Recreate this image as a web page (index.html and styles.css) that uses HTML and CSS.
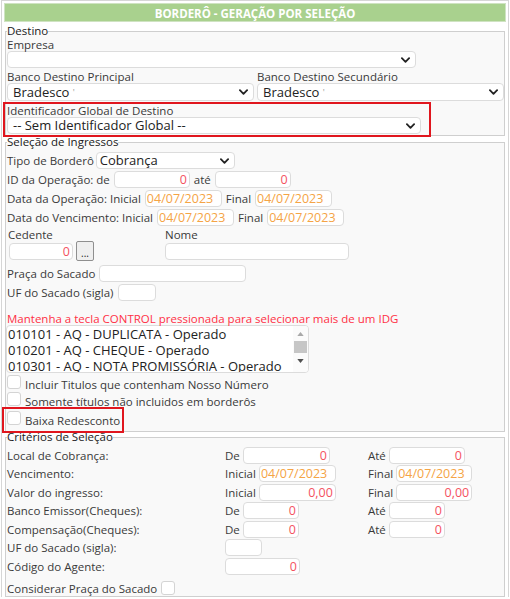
FILE: index.html
```html
<!DOCTYPE html>
<html lang="pt-BR">
<head>
<meta charset="utf-8">
<title>Borderô - Geração por Seleção</title>
<link rel="stylesheet" href="styles.css">
</head>
<body>
<div class="page">
  <div class="title">BORDERÔ - GERAÇÃO POR SELEÇÃO</div>

  <fieldset class="fs fs-destino">
    <legend>Destino</legend>
    <div class="lbl">Empresa</div>
    <div class="sel sel-empresa"><span class="sel-text"></span><svg class="chev" viewBox="0 0 10 6"><polyline points="1,1 5,5 9,1"/></svg></div>
    <div class="bancos">
      <div class="banco">
        <div class="lbl">Banco Destino Principal</div>
        <div class="sel"><span class="sel-text">Bradesco <span class="tick">'</span></span><svg class="chev" viewBox="0 0 10 6"><polyline points="1,1 5,5 9,1"/></svg></div>
      </div>
      <div class="banco">
        <div class="lbl">Banco Destino Secundário</div>
        <div class="sel"><span class="sel-text">Bradesco <span class="tick">'</span></span><svg class="chev" viewBox="0 0 10 6"><polyline points="1,1 5,5 9,1"/></svg></div>
      </div>
    </div>
    <div class="idg">
      <div class="lbl lbl-idg">Identificador Global de Destino</div>
      <div class="sel sel-idg"><span class="sel-text">-- Sem Identificador Global --</span><svg class="chev" viewBox="0 0 10 6"><polyline points="1,1 5,5 9,1"/></svg></div>
    </div>
  </fieldset>

  <fieldset class="fs fs-sel">
    <legend>Seleção de Ingressos</legend>
    <div class="row r-tipo"><span>Tipo de Borderô</span><div class="sel sel-tipo"><span class="sel-text">Cobrança</span><svg class="chev" viewBox="0 0 10 6"><polyline points="1,1 5,5 9,1"/></svg></div></div>
    <div class="row"><span>ID da Operação: de</span><input class="inp num w76" value="0"><span>até</span><input class="inp num w76" value="0"></div>
    <div class="row"><span>Data da Operação: Inicial</span><input class="inp date w77" value="04/07/2023"><span>Final</span><input class="inp date w77" value="04/07/2023"></div>
    <div class="row"><span>Data do Vencimento: Inicial</span><input class="inp date w77" value="04/07/2023"><span>Final</span><input class="inp date w77" value="04/07/2023"></div>
    <div class="ced-nome">
      <div class="ced">
        <div class="lbl lbl-ced">Cedente</div>
        <div class="ced-in"><input class="inp num w64" value="0"><button class="dots" type="button">...</button></div>
      </div>
      <div class="nome">
        <div class="lbl">Nome</div>
        <input class="inp w184 nome-in">
      </div>
    </div>
    <div class="row r-praca"><span>Praça do Sacado</span><input class="inp w147"></div>
    <div class="row r-uf"><span>UF do Sacado (sigla)</span><input class="inp w38"></div>
    <div class="warn">Mantenha a tecla CONTROL pressionada para selecionar mais de um IDG</div>
    <div class="listbox">
      <div class="opts">
        <div>010101 - AQ - DUPLICATA - Operado</div>
        <div>010201 - AQ - CHEQUE - Operado</div>
        <div>010301 - AQ - NOTA PROMISSÓRIA - Operado</div>
      </div>
      <div class="sbar">
        <svg class="arr" viewBox="0 0 8 5"><polygon class="arr-up" points="0,5 4,0 8,5"/></svg>
        <div class="thumb"></div>
        <svg class="arr" viewBox="0 0 8 5"><polygon class="arr-dn" points="0,0 8,0 4,5"/></svg>
      </div>
    </div>
    <div class="chk c1"><span class="box"></span><span class="chk-t">Incluir Titulos que contenham Nosso Número</span></div>
    <div class="chk c2"><span class="box"></span><span class="chk-t">Somente títulos não incluidos em borderôs</span></div>
    <div class="chk c3"><span class="box"></span><span class="chk-t">Baixa Redesconto</span></div>
  </fieldset>

  <fieldset class="fs fs-crit">
    <legend>Critérios de Seleção</legend>
    <div class="grid">
      <div>Local de Cobrança:</div>
      <div class="cell"><span>De</span><input class="inp num w87" value="0"></div>
      <div class="cell"><span>Até</span><input class="inp num w76" value="0"></div>

      <div>Vencimento:</div>
      <div class="cell"><span>Inicial</span><input class="inp date w77" value="04/07/2023"></div>
      <div class="cell"><span>Final</span><input class="inp date w76" value="04/07/2023"></div>

      <div>Valor do ingresso:</div>
      <div class="cell"><span>Inicial</span><input class="inp num w77" value="0,00"></div>
      <div class="cell"><span>Final</span><input class="inp num w76" value="0,00"></div>

      <div>Banco Emissor(Cheques):</div>
      <div class="cell"><span>De</span><input class="inp num w56" value="0"></div>
      <div class="cell"><span>Até</span><input class="inp num w56" value="0"></div>

      <div>Compensação(Cheques):</div>
      <div class="cell"><span>De</span><input class="inp num w56" value="0"></div>
      <div class="cell"><span>Até</span><input class="inp num w56" value="0"></div>

      <div>UF do Sacado (sigla):</div>
      <div class="cell"><input class="inp w37"></div>
      <div></div>

      <div>Código do Agente:</div>
      <div class="cell"><input class="inp num w75" value="0"></div>
      <div></div>
    </div>
    <div class="consid"><span>Considerar Praça do Sacado</span><span class="box"></span></div>
  </fieldset>
</div>
</body>
</html>
```

FILE: styles.css
```css
* { box-sizing: border-box; }
html, body { margin: 0; padding: 0; background: #fff; }
body {
  font-family: "Open Sans", "DejaVu Sans", sans-serif;
  font-size: 11.5px;
  line-height: 13px;
  color: #3a3a3a;
}
.page {
  width: 508px;
  margin-left: 1px;
  border: 1px solid #d6d6d6;
  border-bottom: none;
  padding: 2px 2px 0;
}
.title {
  height: 19px;
  background: #a9d18e;
  color: #fff;
  font-weight: 700;
  font-size: 11.5px;
  line-height: 19px;
  text-align: center;
  border: 1px solid #cfe3c2;
}

/* fieldsets */
.fs {
  margin: 0 1px;
  padding: 0 0 0 1px;
  border: 1px solid #cfcfcf;
  background: #f9f9f9;
  min-width: 0;
}
.fs legend {
  padding: 0;
  font-size: 11.5px;
  line-height: 14px;
  color: #1a1a1a;
}
.fs-destino { margin-top: 2px; }
.fs-sel { margin-top: -1px; }
.fs-crit { margin-top: -2px; padding-bottom: 1px; }

.lbl { line-height: 13px; height: 13px; }

/* select look-alike */
.sel {
  height: 17px;
  background: #fff;
  border: 1px solid #dcdcdc;
  border-radius: 4px;
  display: flex;
  align-items: center;
  justify-content: space-between;
  padding: 0 5px 0 5px;
  font-size: 13px;
  color: #222;
}
.sel-text { white-space: nowrap; }
.tick { color: #999; font-size: 9px; vertical-align: top; }
.chev { width: 9px; height: 6px; flex: none; }
.chev polyline { fill: none; stroke: #222; stroke-width: 2; stroke-linecap: round; stroke-linejoin: round; }

.sel-empresa { width: 409px; }
.bancos { display: flex; gap: 3px; margin-top: 2px; }
.banco { width: 247px; }
.banco .sel { height: 18px; }
.idg {
  margin-top: 3px;
  margin-left: -2px;
  width: 424px;
  padding: 0 0 1px 2px;
  outline: 2px solid #e0161e;
}
.lbl-idg { height: 13px; line-height: 13px; }
.sel-idg { width: 414px; height: 17px; }

/* rows */
.row {
  display: flex;
  align-items: center;
  gap: 4px;
  height: 17px;
  margin-top: 2px;
  white-space: nowrap;
}
.r-tipo { gap: 2px; margin-top: 3px; }
.sel-tipo { width: 139px; padding-left: 3px; }

.inp {
  height: 17px;
  border: 1px solid #dcdcdc;
  border-radius: 4px;
  background: #fff;
  font-family: "Open Sans", "DejaVu Sans", sans-serif;
  font-size: 12.5px;
  padding: 0 2px;
  margin: 0;
  outline: none;
}
.num { text-align: right; color: #f4525f; }
.date { text-align: left; color: #f5a445; padding-left: 1px; }
.w37 { width: 37px; }
.w38 { width: 38px; }
.w56 { width: 56px; }
.w64 { width: 64px; }
.w75 { width: 75px; }
.w76 { width: 76px; }
.w77 { width: 77px; }
.w87 { width: 87px; }
.w147 { width: 147px; }
.w184 { width: 184px; }

.ced-nome { display: flex; margin-top: 2px; }
.ced { width: 158px; }
.lbl-ced { padding-left: 1px; }
.ced-in { display: flex; align-items: center; gap: 3px; padding-left: 2px; height: 20px; }
.dots {
  width: 18px;
  height: 20px;
  padding: 0;
  margin: 0;
  border: 1px solid #8f8f8f;
  border-radius: 2px;
  background: #efefef;
  font-family: "Open Sans", sans-serif;
  font-size: 10px;
  line-height: 22px;
  color: #222;
}
.nome-in { display: block; margin-top: 2px; }
.r-praca { margin-top: 4px; }

.warn {
  margin-top: 11px;
  line-height: 13px;
  color: #ff3045;
  white-space: nowrap;
}
.listbox {
  width: 303px;
  height: 48px;
  margin-left: -1px;
  background: #fff;
  border: 1px solid #dcdcdc;
  border-radius: 4px;
  display: flex;
  overflow: hidden;
}
.opts {
  flex: 1;
  padding: 0 0 0 1px;
  font-size: 13px;
  line-height: 16px;
  color: #222;
  white-space: nowrap;
  overflow: hidden;
}
.sbar {
  width: 15px;
  background: #fbfbfb;
  display: flex;
  flex-direction: column;
  align-items: center;
  padding-top: 6px;
}
.arr { width: 7px; height: 4px; }
.arr-up { fill: #a9a9a9; }
.arr-dn { fill: #505050; }
.thumb { width: 13px; height: 12px; background: #c6c6c6; margin: 5px 0 6px; }

.chk { display: flex; align-items: flex-start; gap: 4px; white-space: nowrap; }
.box {
  width: 14px;
  height: 14px;
  flex: none;
  background: #fff;
  border: 1px solid #d4d4d4;
  border-radius: 3px;
}
.chk-t { margin-top: 3px; line-height: 13px; }
.c1 { margin-top: 2px; height: 17px; }
.c2 { height: 17px; }
.c3 {
  height: 22px;
  width: 118px;
  margin-left: -3px;
  padding: 2px 0 0 3px;
  outline: 2px solid #e0161e;
  position: relative;
}

/* criteria grid */
.grid {
  display: grid;
  grid-template-columns: 218px 142px 1fr;
  grid-template-rows: repeat(7, 18.5px);
  align-items: center;
  margin-top: 2px;
  white-space: nowrap;
}
.cell { display: flex; align-items: center; gap: 3px; }
.grid > div:nth-child(3n) { padding-left: 1px; }
.consid { display: flex; align-items: flex-end; gap: 4px; margin-top: 3px; height: 16px; }
.consid span:first-child { line-height: 13px; }
```
